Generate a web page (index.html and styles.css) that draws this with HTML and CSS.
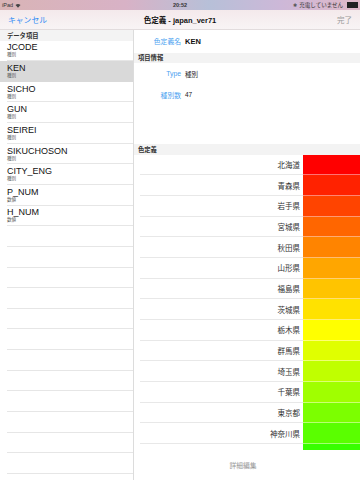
FILE: index.html
```html
<!DOCTYPE html>
<html>
<head>
  <meta charset="utf-8">
  <title>色定義 - japan_ver71</title>
  <link rel="stylesheet" href="styles.css">
</head>
<body>
  <div class="statusbar">
    <div class="sb-left">iPad
      <svg class="wifi" width="6" height="5" viewBox="0 0 12 10">
        <path d="M6 9.5 L1 4 A7.5 7.5 0 0 1 11 4 Z" fill="#444"/>
      </svg>
    </div>
    <div class="sb-time">20:52</div>
    <div class="sb-right">
      <span class="bt">&#10033;</span> 充電していません
      <span class="battery"><span class="battery-fill"></span></span>
    </div>
  </div>

  <header class="navbar">
    <a class="nav-cancel">キャンセル</a>
    <h1 class="nav-title">色定義 - japan_ver71</h1>
    <a class="nav-done">完了</a>
  </header>

  <div class="split">
    <aside class="master">
      <div class="section-head">データ項目</div>
      <ul class="item-list">
        <li class="item"><div class="cell"><span class="item-name">JCODE</span><span class="item-sub">種別</span></div></li>
        <li class="item selected"><div class="cell"><span class="item-name">KEN</span><span class="item-sub">種別</span></div></li>
        <li class="item"><div class="cell"><span class="item-name">SICHO</span><span class="item-sub">種別</span></div></li>
        <li class="item"><div class="cell"><span class="item-name">GUN</span><span class="item-sub">種別</span></div></li>
        <li class="item"><div class="cell"><span class="item-name">SEIREI</span><span class="item-sub">種別</span></div></li>
        <li class="item"><div class="cell"><span class="item-name">SIKUCHOSON</span><span class="item-sub">種別</span></div></li>
        <li class="item"><div class="cell"><span class="item-name">CITY_ENG</span><span class="item-sub">種別</span></div></li>
        <li class="item"><div class="cell"><span class="item-name">P_NUM</span><span class="item-sub">数値</span></div></li>
        <li class="item"><div class="cell"><span class="item-name">H_NUM</span><span class="item-sub">数値</span></div></li>
        <li class="item"><div class="cell"></div></li>
        <li class="item"><div class="cell"></div></li>
        <li class="item"><div class="cell"></div></li>
        <li class="item"><div class="cell"></div></li>
        <li class="item"><div class="cell"></div></li>
        <li class="item"><div class="cell"></div></li>
        <li class="item"><div class="cell"></div></li>
        <li class="item"><div class="cell"></div></li>
        <li class="item"><div class="cell"></div></li>
        <li class="item"><div class="cell"></div></li>
        <li class="item"><div class="cell"></div></li>
        <li class="item"><div class="cell"></div></li>
        <li class="item"><div class="cell"></div></li>
      </ul>
    </aside>

    <main class="detail">
      <div class="field name-field">
        <span class="field-label">色定義名</span>
        <span class="field-value strong">KEN</span>
      </div>
      <div class="section-head">項目情報</div>
      <div class="field">
        <span class="field-label">Type</span>
        <span class="field-value">種別</span>
      </div>
      <div class="field">
        <span class="field-label">種別数</span>
        <span class="field-value">47</span>
      </div>
      <div class="spacer"></div>
      <div class="section-head">色定義</div>
      <ul class="color-list">
        <li class="color-row"><span class="color-name">北海道</span><span class="swatch" style="background:#ff0000"></span></li>
        <li class="color-row"><span class="color-name">青森県</span><span class="swatch" style="background:#ff2200"></span></li>
        <li class="color-row"><span class="color-name">岩手県</span><span class="swatch" style="background:#ff4400"></span></li>
        <li class="color-row"><span class="color-name">宮城県</span><span class="swatch" style="background:#ff6600"></span></li>
        <li class="color-row"><span class="color-name">秋田県</span><span class="swatch" style="background:#ff8400"></span></li>
        <li class="color-row"><span class="color-name">山形県</span><span class="swatch" style="background:#ffa600"></span></li>
        <li class="color-row"><span class="color-name">福島県</span><span class="swatch" style="background:#ffc400"></span></li>
        <li class="color-row"><span class="color-name">茨城県</span><span class="swatch" style="background:#ffe200"></span></li>
        <li class="color-row"><span class="color-name">栃木県</span><span class="swatch" style="background:#ffff00"></span></li>
        <li class="color-row"><span class="color-name">群馬県</span><span class="swatch" style="background:#e0ff00"></span></li>
        <li class="color-row"><span class="color-name">埼玉県</span><span class="swatch" style="background:#c0ff00"></span></li>
        <li class="color-row"><span class="color-name">千葉県</span><span class="swatch" style="background:#a0ff00"></span></li>
        <li class="color-row"><span class="color-name">東京都</span><span class="swatch" style="background:#7cff00"></span></li>
        <li class="color-row"><span class="color-name">神奈川県</span><span class="swatch" style="background:#5aff00"></span></li>
        <li class="color-row"><span class="color-name">新潟県</span><span class="swatch" style="background:#38ff00"></span></li>
      </ul>
      <footer class="detail-footer">詳細編集</footer>
    </main>
  </div>
</body>
</html>
```

FILE: styles.css
```css
body, h1, ul, li {
  margin: 0;
  padding: 0;
}

body {
  width: 360px;
  height: 480px;
  overflow: hidden;
  font-family: "Liberation Sans", "Noto Sans CJK JP", sans-serif;
  color: #222;
  background-color: #fff;
}

ul {
  list-style: none;
}

/* status bar */
.statusbar {
  height: 10px;
  display: flex;
  align-items: center;
  justify-content: space-between;
  padding: 0 2px;
  font-size: 5.5px;
  color: #333;
  background: linear-gradient(90deg, #d9b4b6 0%, #d8b2c6 35%, #b7c0d8 58%, #cdb8d8 78%, #e0b9c8 100%);
}

.sb-left {
  display: flex;
  align-items: center;
  gap: 2px;
  width: 120px;
}

.sb-time {
  font-weight: bold;
}

.sb-right {
  width: 120px;
  display: flex;
  align-items: center;
  justify-content: flex-end;
  gap: 2px;
}

.bt {
  font-size: 5px;
  color: #555;
}

.battery {
  width: 9px;
  height: 3.5px;
  border: 0.5px solid #222;
  margin-left: 2px;
  display: flex;
}

.battery-fill {
  flex: 1;
  background-color: #222;
}

/* nav bar */
.navbar {
  height: 20px;
  display: flex;
  align-items: center;
  justify-content: space-between;
  padding: 0 8px;
  background: linear-gradient(180deg, #f4e9eb 0%, #f8f4f5 100%);
  border-bottom: 1px solid #e2dcdd;
  box-sizing: border-box;
}

.nav-cancel {
  width: 60px;
  font-size: 7.8px;
  color: #2f8bf5;
}

.nav-title {
  font-size: 7.5px;
  font-weight: 600;
  color: #111;
}

.nav-done {
  width: 60px;
  text-align: right;
  font-size: 7.5px;
  color: #9a9a9a;
}

/* split view */
.split {
  display: flex;
  height: 450px;
}

.master {
  width: 133px;
  border-right: 1px solid #dcdcdc;
  overflow: hidden;
}

.section-head {
  height: 10.5px;
  display: flex;
  align-items: center;
  padding-left: 7px;
  font-size: 6.3px;
  font-weight: 600;
  color: #333;
  background-color: #f3f3f3;
}

.item {
  height: 20.65px;
}

.item.selected {
  background-color: #d9d9d9;
}

.cell {
  height: 100%;
  box-sizing: border-box;
  margin-left: 7px;
  border-bottom: 1px solid #e6e6e6;
  display: flex;
  flex-direction: column;
  justify-content: center;
}

.item.selected .cell {
  border-bottom-color: #d9d9d9;
}

.item-name {
  font-size: 9px;
  line-height: 10px;
  color: #111;
}

.item-sub {
  font-size: 4.6px;
  line-height: 6px;
  color: #555;
}

/* detail */
.detail {
  flex: 1;
  display: flex;
  flex-direction: column;
  overflow: hidden;
}

.detail .section-head {
  padding-left: 4px;
  flex-shrink: 0;
}

.field {
  height: 21px;
  display: flex;
  align-items: center;
  gap: 4px;
  flex-shrink: 0;
}

.name-field {
  height: 22.5px;
}

.field-label {
  width: 47px;
  text-align: right;
  font-size: 6.8px;
  color: #4a9ff0;
}

.field-value {
  font-size: 6.5px;
  color: #222;
}

.field-value.strong {
  font-size: 7.5px;
  font-weight: bold;
  color: #111;
}

.spacer {
  height: 39px;
  flex-shrink: 0;
}

.color-list {
  height: 295px;
  overflow: hidden;
  flex-shrink: 0;
}

.color-row {
  height: 20.7px;
  display: flex;
}

.color-name {
  flex: 1;
  margin-left: 6px;
  padding-right: 3px;
  display: flex;
  align-items: center;
  justify-content: flex-end;
  font-size: 7.5px;
  color: #333;
  border-bottom: 1px solid #e8e8e8;
}

.swatch {
  width: 57px;
  border-bottom: 1px solid rgba(255, 255, 255, 0.45);
}

.detail-footer {
  flex: 1;
  display: flex;
  align-items: center;
  justify-content: center;
  font-size: 6.8px;
  color: #999;
  padding-right: 8px;
}
```
